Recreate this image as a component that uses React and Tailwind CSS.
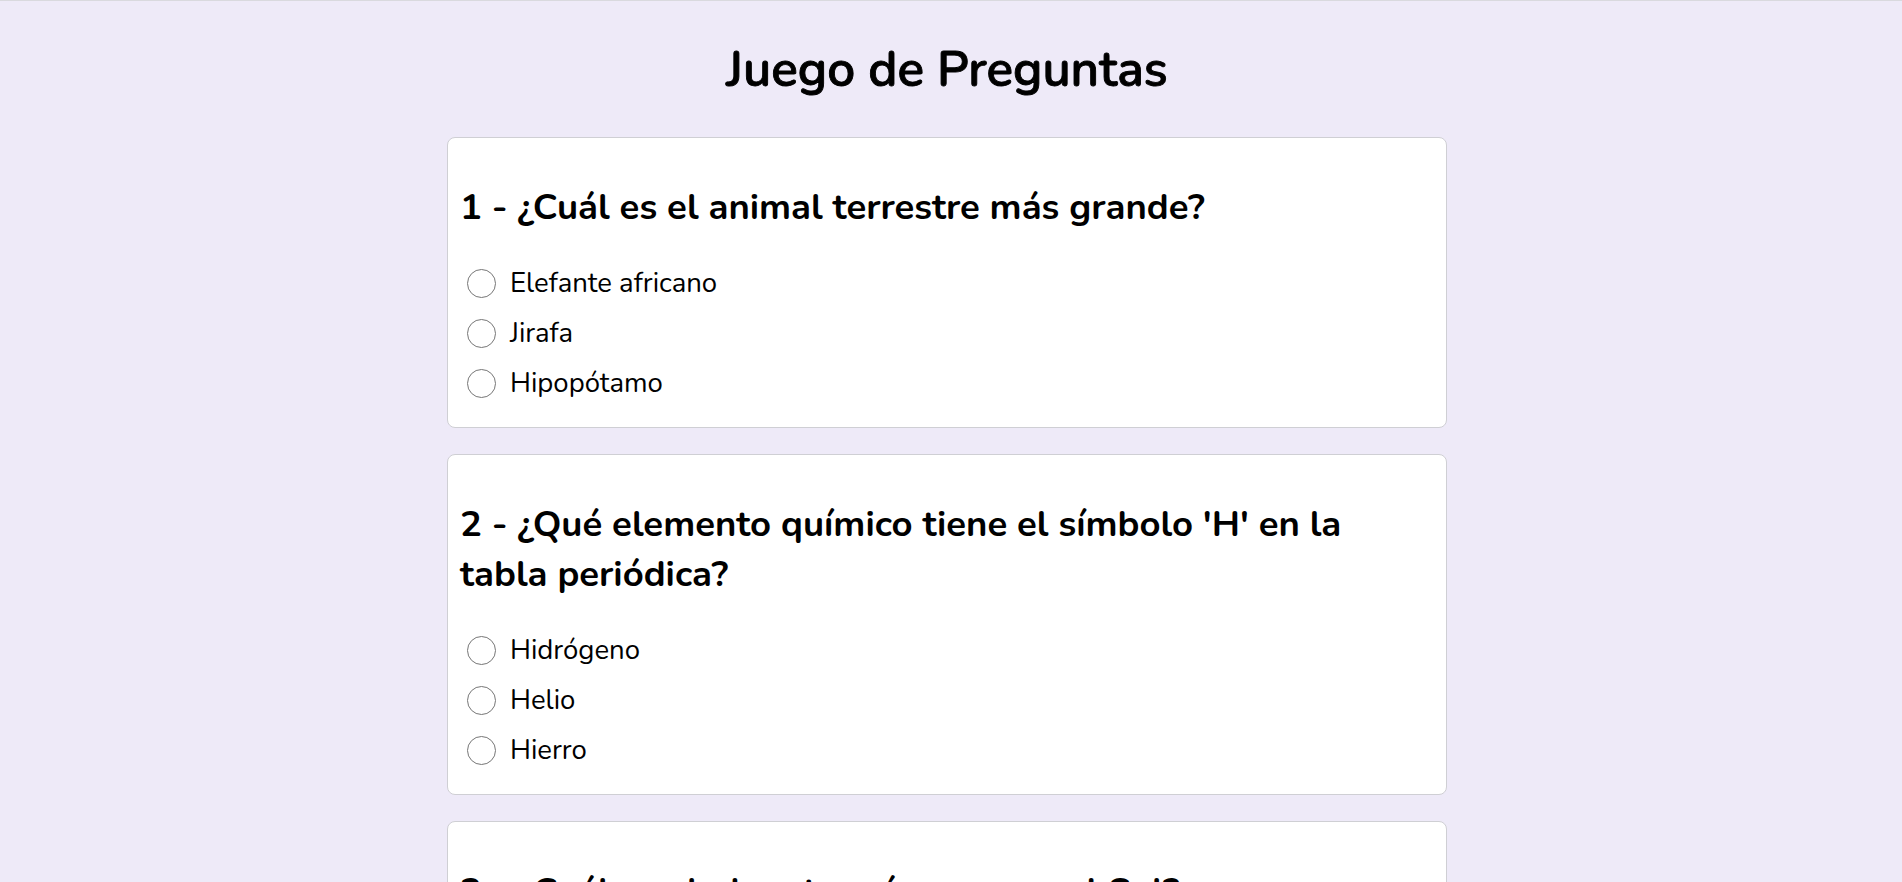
import React, { useState } from 'react';

const preguntas = [
  {
    id: 1,
    texto: '¿Cuál es el animal terrestre más grande?',
    opciones: ['Elefante africano', 'Jirafa', 'Hipopótamo'],
  },
  {
    id: 2,
    texto: "¿Qué elemento químico tiene el símbolo 'H' en la tabla periódica?",
    opciones: ['Hidrógeno', 'Helio', 'Hierro'],
  },
  {
    id: 3,
    texto: '¿Cuál es el planeta más cercano al Sol?',
    opciones: ['Mercurio', 'Venus', 'Marte'],
  },
];

const Pregunta = ({ pregunta, seleccion, onSelect }) => (
  <div className="bg-white border border-[#cfcfd4] rounded-lg px-3 pt-[44px] pb-[19px]">
    <h2 className="text-[36.5px] leading-[50px] font-bold text-black pr-[40px]">
      {pregunta.id} - {pregunta.texto}
    </h2>
    <div className="mt-[26px] flex flex-col">
      {pregunta.opciones.map((op) => (
        <label key={op} className="flex items-center h-[50px] cursor-pointer">
          <input
            type="radio"
            name={`p${pregunta.id}`}
            checked={seleccion === op}
            onChange={() => onSelect(pregunta.id, op)}
            className="appearance-none ml-[7px] w-[29px] h-[29px] rounded-full border border-[#767676] bg-white checked:border-[8px] checked:border-blue-600"
          />
          <span className="ml-[14px] mt-[2px] text-[27.5px] text-black">{op}</span>
        </label>
      ))}
    </div>
  </div>
);

export default function App() {
  const [respuestas, setRespuestas] = useState({});

  const handleSelect = (id, op) => {
    setRespuestas({ ...respuestas, [id]: op });
  };

  return (
    <div className="min-h-screen bg-[#eeeaf8] border-t border-[#d9d9de] pr-[8px] font-['Nunito','Lato',sans-serif]">
      <h1 className="text-[49.5px] leading-[56px] font-semibold text-black text-center pt-[41px] [-webkit-text-stroke:0.9px_black]">
        Juego de Preguntas
      </h1>
      <div className="w-[1000px] mx-auto mt-[39px] flex flex-col gap-[26px] pb-10">
        {preguntas.map((p) => (
          <Pregunta
            key={p.id}
            pregunta={p}
            seleccion={respuestas[p.id]}
            onSelect={handleSelect}
          />
        ))}
      </div>
    </div>
  );
}
